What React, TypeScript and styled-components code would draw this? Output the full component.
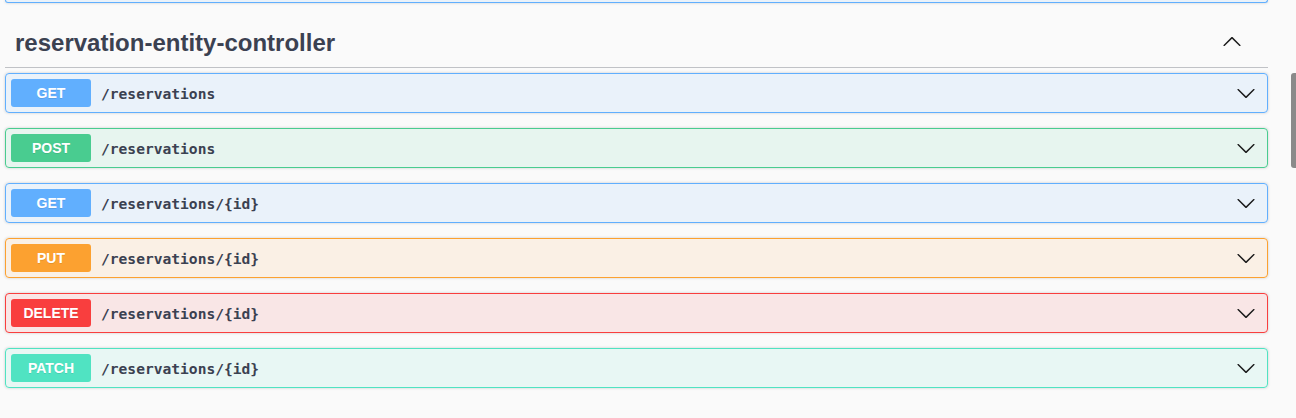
import React from "react";
import styled, { createGlobalStyle } from "styled-components";

type Method = "get" | "post" | "put" | "delete" | "patch";

const colors: Record<Method, string> = {
	get: "97, 175, 254",
	post: "73, 204, 144",
	put: "252, 161, 48",
	delete: "249, 62, 62",
	patch: "80, 227, 194",
};

const operations: { method: Method; path: string }[] = [
	{ method: "get", path: "/reservations" },
	{ method: "post", path: "/reservations" },
	{ method: "get", path: "/reservations/{id}" },
	{ method: "put", path: "/reservations/{id}" },
	{ method: "delete", path: "/reservations/{id}" },
	{ method: "patch", path: "/reservations/{id}" },
];

const ArrowDown = () => (
	<Arrow viewBox="0 0 20 20">
		<path d="M17.418 6.109c.272-.268.709-.268.979 0s.271.701 0 .969l-7.908 7.83c-.27.268-.707.268-.979 0l-7.908-7.83c-.27-.268-.27-.701 0-.969.271-.268.709-.268.979 0L10 13.25l7.418-7.141z" />
	</Arrow>
);

const ArrowUp = () => (
	<Arrow viewBox="0 0 20 20">
		<path d="M17.418 14.908c.272.268.709.268.979 0s.271-.701 0-.969l-7.908-7.83c-.27-.268-.707-.268-.979 0l-7.908 7.83c-.27.268-.27.701 0 .969.271.268.709.268.979 0L10 7.767l7.418 7.141z" />
	</Arrow>
);

class App extends React.Component {
	render() {
		return (
			<>
				<GlobalStyle />
				<Page>
					<Main>
						<PrevBlock />
						<TagHeader>
							<TagTitle>reservation-entity-controller</TagTitle>
							<ExpandButton>
								<ArrowUp />
							</ExpandButton>
						</TagHeader>
						{operations.map((op, i) => (
							<OpBlock key={i} $rgb={colors[op.method]}>
								<Badge $rgb={colors[op.method]}>{op.method.toUpperCase()}</Badge>
								<Path>{op.path}</Path>
								<SummaryControl>
									<ArrowDown />
								</SummaryControl>
							</OpBlock>
						))}
					</Main>
					<ScrollTrack>
						<Thumb />
					</ScrollTrack>
				</Page>
			</>
		);
	}
}
export default App;

const GlobalStyle = createGlobalStyle`
	body {
		margin: 0;
		background: #fafafa;
	}
`;

const Page = styled.div`
	display: flex;
	height: 418px;
	overflow: hidden;
	background: #fafafa;
`;

const Main = styled.div`
	width: 1263px;
	margin-left: 5px;
`;

const PrevBlock = styled.div`
	height: 2px;
	border: 1px solid #61affe;
	border-top: none;
	border-radius: 0 0 4px 4px;
	background: rgba(97, 175, 254, 0.1);
	box-shadow: 0 0 3px rgba(0, 0, 0, 0.19);
	margin-bottom: 15px;
`;

const TagHeader = styled.div`
	display: flex;
	align-items: center;
	height: 29px;
	padding: 10px 20px 10px 10px;
	margin-bottom: 5px;
	border-bottom: 1px solid rgba(59, 65, 81, 0.3);
`;

const TagTitle = styled.h4`
	flex: 1;
	margin: 0;
	font-family: "Liberation Sans", Arial, sans-serif;
	font-size: 24px;
	font-weight: 700;
	line-height: 29px;
	color: #3b4151;
`;

const ExpandButton = styled.div`
	display: flex;
	margin-right: 6px;
	margin-top: -4px;
`;

const Arrow = styled.svg`
	width: 20px;
	height: 20px;
	fill: #1b1b1b;
`;

const OpBlock = styled.div<{ $rgb: string }>`
	display: flex;
	align-items: center;
	padding: 5px;
	margin-bottom: 15px;
	border: 1px solid rgb(${(p) => p.$rgb});
	border-radius: 4px;
	background: rgba(${(p) => p.$rgb}, 0.1);
	box-shadow: 0 0 3px rgba(0, 0, 0, 0.19);
`;

const Badge = styled.span<{ $rgb: string }>`
	min-width: 80px;
	padding: 6px 0;
	border-radius: 3px;
	background: rgb(${(p) => p.$rgb});
	color: #fff;
	font-family: "Liberation Sans", Arial, sans-serif;
	font-size: 14px;
	font-weight: 700;
	line-height: 16px;
	text-align: center;
	text-shadow: 0 1px 0 rgba(0, 0, 0, 0.1);
`;

const Path = styled.span`
	flex: 1;
	padding: 0 10px;
	font-family: "DejaVu Sans Mono", "Liberation Mono", monospace;
	font-size: 14.6px;
	font-weight: 700;
	color: #3b4151;
`;

const SummaryControl = styled.div`
	display: flex;
	margin-right: 6px;
`;

const ScrollTrack = styled.div`
	margin-left: auto;
	width: 5px;
	padding-top: 73px;
`;

const Thumb = styled.div`
	height: 95px;
	background: #8a8a8a;
	border-radius: 3px 0 0 3px;
`;
